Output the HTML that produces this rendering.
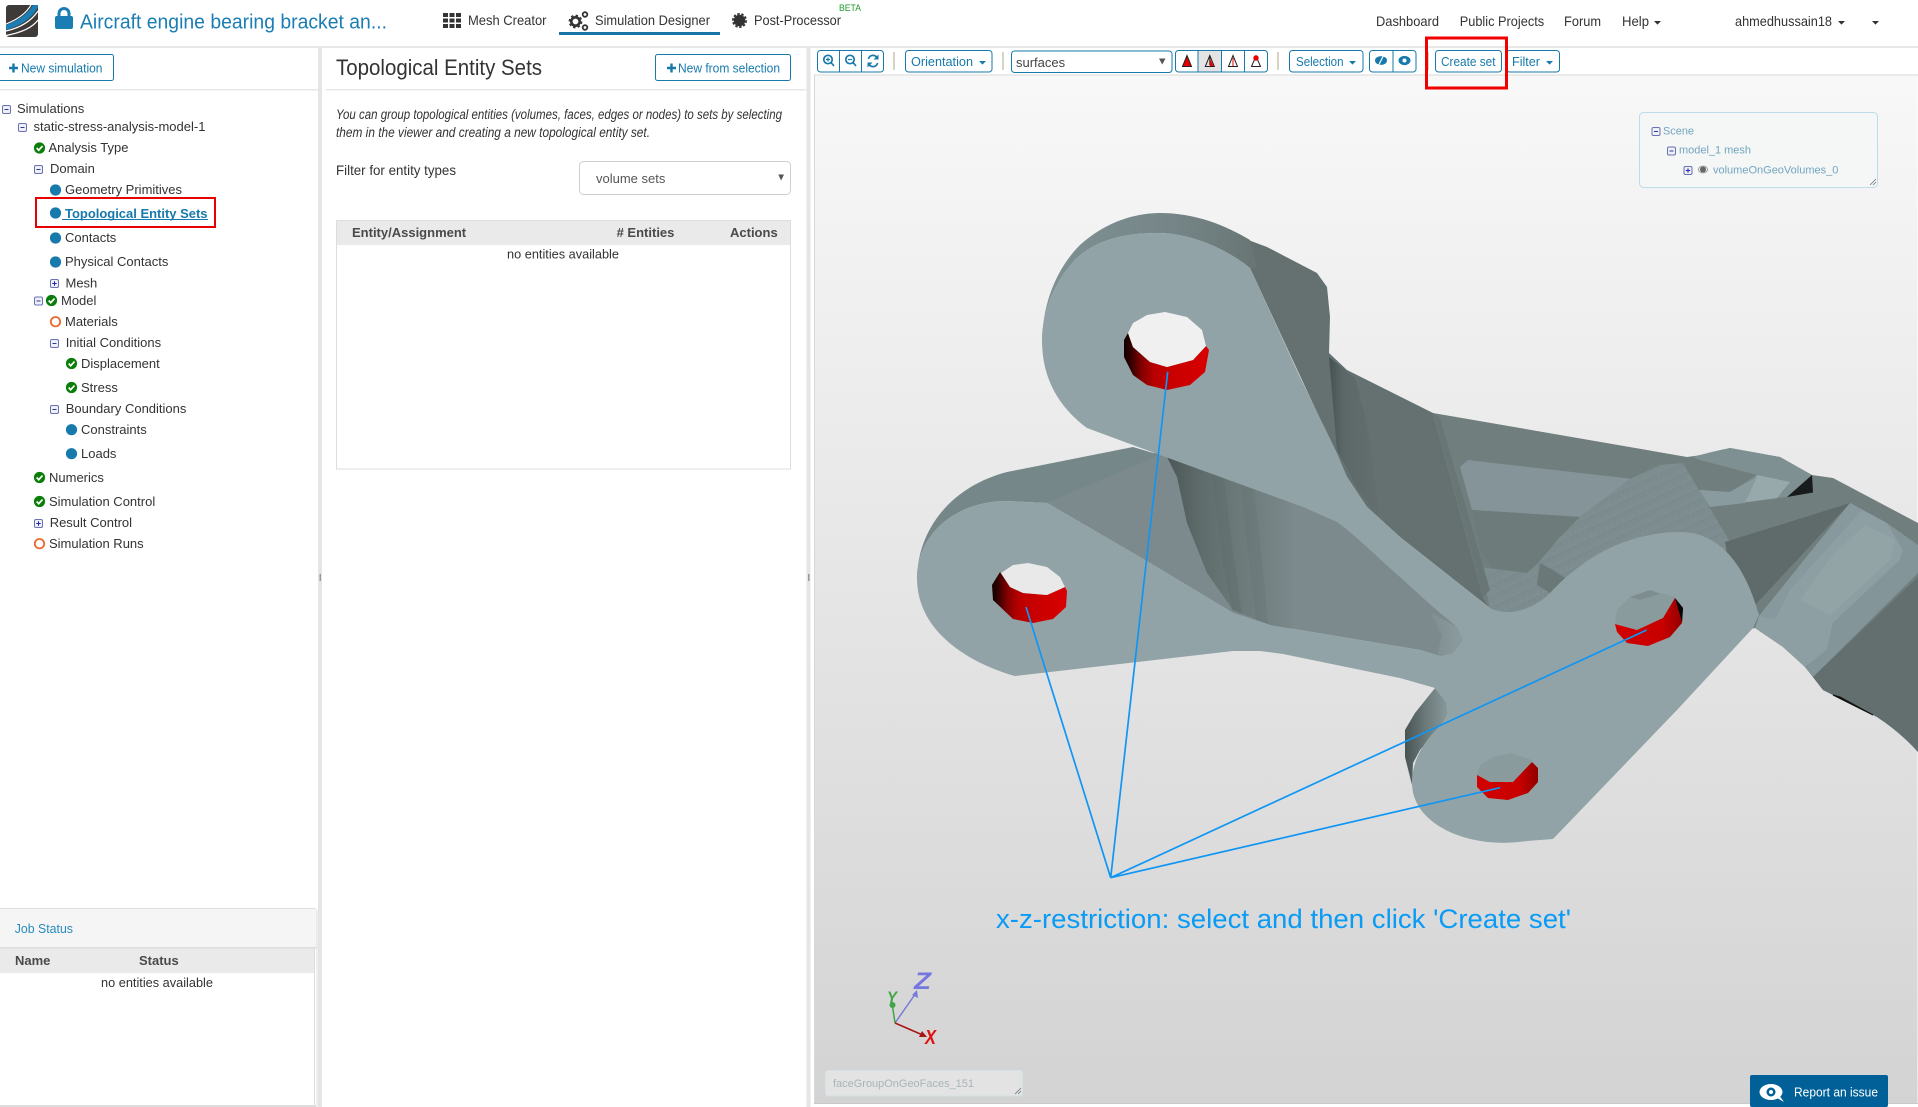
<!DOCTYPE html>
<html lang="en">
<head>
<meta charset="utf-8">
<title>Topological Entity Sets</title>
<style>
html,body{margin:0;padding:0;background:#fff;width:1918px;height:1107px;overflow:hidden}
svg{display:block;position:absolute;left:0;top:0}
text{font-family:"Liberation Sans",sans-serif;fill:#333;font-size:13px;white-space:pre}
.l{font-size:14px}
.b{fill:#1779ac}
.h{font-weight:bold;fill:#4a4a4a}
.s{font-size:11px;fill:#72a6c0}
.btn{fill:#fff;stroke:#1779ac;stroke-width:1}
.sep{stroke:#c9c4b4;stroke-width:1.5}
.hl{fill:none;stroke:#e60000;stroke-width:2}
</style>
</head>
<body>
<svg width="1918" height="1107" viewBox="0 0 1918 1107" xmlns="http://www.w3.org/2000/svg">
<defs>
<linearGradient id="bg" x1="0" y1="0" x2="0" y2="1"><stop offset="0" stop-color="#f8f8f8"/><stop offset="1" stop-color="#d3d3d3"/></linearGradient>
<linearGradient id="red" x1="0" y1="0" x2="1" y2="0"><stop offset="0" stop-color="#120000"/><stop offset=".07" stop-color="#2c0000"/><stop offset=".2" stop-color="#800000"/><stop offset=".35" stop-color="#b80000"/><stop offset=".55" stop-color="#c80000"/><stop offset="1" stop-color="#d80000"/></linearGradient>
<linearGradient id="red2" x1="0" y1="0" x2="1" y2="0"><stop offset="0" stop-color="#d20000"/><stop offset=".7" stop-color="#c80000"/><stop offset="1" stop-color="#900000"/></linearGradient>
<linearGradient id="band" x1="0" y1="0" x2="1" y2="0"><stop offset="0" stop-color="#7f9193"/><stop offset=".6" stop-color="#768688"/><stop offset="1" stop-color="#687574"/></linearGradient>
<linearGradient id="rib" gradientUnits="userSpaceOnUse" x1="1170" y1="0" x2="1295" y2="0"><stop offset="0" stop-color="#4e5959"/><stop offset=".25" stop-color="#5f6c6c"/><stop offset=".55" stop-color="#6d7a7a"/><stop offset="1" stop-color="#7b898c"/></linearGradient>
<linearGradient id="rib2" gradientUnits="userSpaceOnUse" x1="1330" y1="0" x2="1385" y2="0"><stop offset="0" stop-color="#485353"/><stop offset=".25" stop-color="#5c6868"/><stop offset="1" stop-color="#657171"/></linearGradient>
<linearGradient id="notch" x1="0" y1="0" x2="1" y2="0"><stop offset="0" stop-color="#485454"/><stop offset=".5" stop-color="#6d7b7c"/><stop offset="1" stop-color="#899a9c"/></linearGradient>
<linearGradient id="pock" x1="0" y1="0" x2="1" y2="0"><stop offset="0" stop-color="#7f8e91"/><stop offset="1" stop-color="#8b9b9e"/></linearGradient>
<pattern id="tri" width="12" height="10" patternUnits="userSpaceOnUse" patternTransform="rotate(-25)"><path d="M0 0L6 10L12 0Z" fill="#6d7c7e" opacity=".12"/><path d="M0 10L6 0L12 10Z" fill="#93a3a6" opacity=".08"/></pattern>
<g id="ck"><circle r="5.6" fill="#0a7d0a"/><path d="M-2.8 0L-.8 2.2L3 -1.9" fill="none" stroke="#fff" stroke-width="1.7"/></g>
<circle id="dot" r="5.6" fill="#1779ac"/>
<circle id="ring" r="4.7" fill="none" stroke="#ea6a2e" stroke-width="1.8"/>
<g id="mi"><rect x="-4" y="-4" width="8" height="8" rx="1.5" fill="#eef0f8" stroke="#6a70b4"/><path d="M-2 0H2" stroke="#343a90" stroke-width="1"/></g>
<g id="pl"><rect x="-4" y="-4" width="8" height="8" rx="1.5" fill="#eef0f8" stroke="#6a70b4"/><path d="M-2.2 0H2.2M0 -2.2V2.2" stroke="#2222bb" stroke-width="1"/></g>
<path id="car" d="M0 0H7L3.5 3.6Z"/>
</defs>

<g id="header">
  <rect x="0" y="46" width="1918" height="2" fill="#e8e8e8"/>
  <rect x="6" y="5" width="32" height="32" rx="3" fill="#3d3a38"/>
  <path d="M6 25Q25 18 33 5H38V7Q30 23 6 30Z" fill="#1a7db4"/>
  <path d="M6 24Q24 17 31 5M6 31Q28 26 38 11M6 35.500Q30 31 38 20" fill="none" stroke="#fff" stroke-width="1.2"/>
  <rect x="55" y="16" width="18" height="13" rx="2" fill="#1a7db4"/>
  <path d="M59 17V13.500a5 5 0 0 1 10 0V17" fill="none" stroke="#1a7db4" stroke-width="3"/>
  <text x="80" y="28.500" style="font-size:20px;fill:#1a7db4" textLength="307" lengthAdjust="spacingAndGlyphs">Aircraft engine bearing bracket an...</text>

  <g fill="#333"><rect x="443" y="13" width="5" height="4"/><rect x="449.500" y="13" width="5" height="4"/><rect x="456" y="13" width="5" height="4"/><rect x="443" y="18.500" width="5" height="4"/><rect x="449.500" y="18.500" width="5" height="4"/><rect x="456" y="18.500" width="5" height="4"/><rect x="443" y="24" width="5" height="4"/><rect x="449.500" y="24" width="5" height="4"/><rect x="456" y="24" width="5" height="4"/></g>
  <text class="l" x="468" y="25" textLength="78.500" lengthAdjust="spacingAndGlyphs">Mesh Creator</text>
  <g fill="none" stroke="#333"><circle cx="575.500" cy="21.500" r="4.200" stroke-width="2.600"/><circle cx="575.500" cy="21.500" r="6" stroke-width="1.800" stroke-dasharray="2.400 2.300"/><circle cx="585" cy="14.500" r="2.300" stroke-width="1.800"/><circle cx="585" cy="27.500" r="2.300" stroke-width="1.800"/></g>
  <text class="l" x="595" y="25" textLength="115" lengthAdjust="spacingAndGlyphs">Simulation Designer</text>
  <rect x="559" y="32" width="161" height="3" fill="#1a75a8"/>
  <circle cx="739.500" cy="20.500" r="5.800" fill="#333"/><circle cx="739.500" cy="20.500" r="6.600" fill="none" stroke="#333" stroke-width="1.800" stroke-dasharray="2.400 1.700"/>
  <text class="l" x="754" y="25" textLength="87" lengthAdjust="spacingAndGlyphs">Post-Processor</text>
  <text x="839" y="11" style="font-size:9px;fill:#1e9a2c" textLength="22" lengthAdjust="spacingAndGlyphs">BETA</text>

  <text class="l" x="1376" y="26" textLength="63" lengthAdjust="spacingAndGlyphs">Dashboard</text>
  <text class="l" x="1459.700" y="26" textLength="84.500" lengthAdjust="spacingAndGlyphs">Public Projects</text>
  <text class="l" x="1564" y="26" textLength="37" lengthAdjust="spacingAndGlyphs">Forum</text>
  <text class="l" x="1622" y="26" textLength="27" lengthAdjust="spacingAndGlyphs">Help</text>
  <use href="#car" x="1654" y="21" fill="#333"/>
  <text class="l" x="1735" y="26" textLength="97" lengthAdjust="spacingAndGlyphs">ahmedhussain18</text>
  <use href="#car" x="1838" y="21" fill="#333"/>
  <use href="#car" x="1872" y="21" fill="#333"/>
</g>

<g id="dividers">
  <rect x="318" y="48" width="4" height="1059" fill="#e5e5e5"/>
  <rect x="806.500" y="48" width="4" height="1059" fill="#e5e5e5"/>
  <rect x="319.500" y="574" width="1.500" height="7" fill="#999"/>
  <rect x="808" y="574" width="1.500" height="7" fill="#999"/>
  <rect x="0" y="89" width="318" height="1.500" fill="#e7e7e7"/>
  <rect x="326" y="89" width="480" height="1.500" fill="#e7e7e7"/>
</g>

<g id="tree">
  <rect class="btn" x="-2.500" y="54.500" width="116" height="26" rx="2"/>
  <path d="M9 68H18M13.500 63.500V72.500" stroke="#1779ac" stroke-width="2.400"/>
  <text class="b" x="21" y="72.500" textLength="81.500" lengthAdjust="spacingAndGlyphs">New simulation</text>

  <use href="#mi" x="6.500" y="109.500"/><text x="17" y="113">Simulations</text>
  <use href="#mi" x="22.500" y="127.500"/><text x="33.500" y="131.200">static-stress-analysis-model-1</text>
  <use href="#ck" x="39.500" y="148"/><text x="48.500" y="152.200">Analysis Type</text>
  <use href="#mi" x="38.500" y="169.500"/><text x="50" y="173.200">Domain</text>
  <use href="#dot" x="55.500" y="190"/><text x="65" y="194">Geometry Primitives</text>
  <use href="#dot" x="55.500" y="213"/>
  <text x="65" y="218" style="font-weight:bold;fill:#1779ac" textLength="142.500" lengthAdjust="spacingAndGlyphs">Topological Entity Sets</text>
  <rect x="62" y="219" width="146" height="1" fill="#1779ac"/>
  <rect class="hl" x="36" y="198" width="179" height="29"/>
  <use href="#dot" x="55.500" y="238"/><text x="65" y="242.200">Contacts</text>
  <use href="#dot" x="55.500" y="262"/><text x="65" y="266.200">Physical Contacts</text>
  <use href="#pl" x="54.500" y="283.500"/><text x="65.500" y="287.500">Mesh</text>
  <use href="#mi" x="38.500" y="301"/><use href="#ck" x="51.500" y="300.500"/><text x="61" y="305">Model</text>
  <use href="#ring" x="55.500" y="321.700"/><text x="65" y="326">Materials</text>
  <use href="#mi" x="54.500" y="343.500"/><text x="65.700" y="347">Initial Conditions</text>
  <use href="#ck" x="71.500" y="363.500"/><text x="81" y="368">Displacement</text>
  <use href="#ck" x="71.500" y="387.500"/><text x="81" y="392">Stress</text>
  <use href="#mi" x="54.500" y="409.500"/><text x="65.700" y="413">Boundary Conditions</text>
  <use href="#dot" x="71.500" y="429.700"/><text x="81" y="434">Constraints</text>
  <use href="#dot" x="71.500" y="453.700"/><text x="81" y="458">Loads</text>
  <use href="#ck" x="39.500" y="477.500"/><text x="49" y="482">Numerics</text>
  <use href="#ck" x="39.500" y="501.500"/><text x="49" y="506">Simulation Control</text>
  <use href="#pl" x="38.500" y="523.500"/><text x="49.700" y="527">Result Control</text>
  <use href="#ring" x="39.500" y="543.700"/><text x="49" y="548">Simulation Runs</text>
</g>

<g id="jobs">
  <rect x="-3" y="908.500" width="320" height="210" rx="3" fill="#fff" stroke="#dedede"/>
  <rect x="-2" y="909" width="318.500" height="38" fill="#f5f5f5"/>
  <rect x="-2" y="947" width="318.500" height="1.500" fill="#ddd"/>
  <rect x="-2" y="948.500" width="316" height="24.500" fill="#eaeaea"/>
  <rect x="314" y="948" width="1" height="158" fill="#ddd"/>
  <rect x="0" y="1105" width="316" height="2" fill="#ddd"/>
  <text x="14.700" y="933" style="fill:#2a8abf" textLength="58.300" lengthAdjust="spacingAndGlyphs">Job Status</text>
  <text class="h" x="15" y="965">Name</text>
  <text class="h" x="139" y="965">Status</text>
  <text x="101" y="987" textLength="112" lengthAdjust="spacingAndGlyphs">no entities available</text>
</g>

<g id="middle">
  <text x="336" y="75" style="font-size:22px" textLength="206" lengthAdjust="spacingAndGlyphs">Topological Entity Sets</text>
  <rect class="btn" x="655.500" y="54.500" width="135" height="26" rx="2"/>
  <path d="M667 68H676M671.500 63.500V72.500" stroke="#1779ac" stroke-width="2.400"/>
  <text class="b" x="678" y="72.500" textLength="102" lengthAdjust="spacingAndGlyphs">New from selection</text>
  <text x="336" y="119" style="font-style:italic;font-size:13.500px" textLength="446" lengthAdjust="spacingAndGlyphs">You can group topological entities (volumes, faces, edges or nodes) to sets by selecting</text>
  <text x="336" y="137" style="font-style:italic;font-size:13.500px" textLength="314" lengthAdjust="spacingAndGlyphs">them in the viewer and creating a new topological entity set.</text>
  <text class="l" x="336" y="175" textLength="120" lengthAdjust="spacingAndGlyphs">Filter for entity types</text>
  <rect x="579.500" y="161.500" width="211" height="33" rx="4" fill="#fff" stroke="#cfcfcf"/>
  <text x="596" y="183" style="fill:#555">volume sets</text>
  <path d="M778.300 174.500H784L781.100 180.500Z" fill="#555"/>
  <rect x="336.500" y="220.500" width="454" height="248.500" fill="#fff" stroke="#ddd"/>
  <rect x="337" y="221" width="453" height="24" fill="#eaeaea"/>
  <text class="h" x="352" y="237">Entity/Assignment</text>
  <text class="h" x="616.600" y="237"># Entities</text>
  <text class="h" x="730" y="237">Actions</text>
  <text x="507" y="258.500" textLength="112" lengthAdjust="spacingAndGlyphs">no entities available</text>
</g>

<g id="viewer">
  <rect x="814.500" y="75" width="1103" height="1028" fill="url(#bg)"/>
  <path d="M814.500 1104V75H1918" fill="none" stroke="#d8d8d8"/>
  <rect x="814" y="1103" width="1104" height="1" fill="#c9c9c9"/>

  <!-- right body -->
  <path d="M1433 413L1687 457Q1705 455 1730 448L1780 457L1812 475L1833 478L1918 523V752Q1900 732 1877 717L1823 690L1805 667L1783 647L1755 628L1700 640L1600 620L1490 608L1483 597Z" fill="#707e7d"/>
  <!-- window -->
  <path d="M1460 467L1468 460L1633 479L1580 517L1472 510Z" fill="#849498"/>
  <path d="M1472 510L1580 517L1560 547L1540 567L1527 580L1507 590L1480 550Z" fill="#6d7b7a"/>
  <!-- textured cylinder -->
  <path d="M1580 517L1630 479L1660 465L1683 463L1693 480L1730 542L1720 560L1660 560L1590 580L1550 615L1507 620L1490 608L1480 567L1527 573L1538 563L1560 537Z" fill="#7c8c8f"/>
  <path d="M1580 517L1630 479L1660 465L1683 463L1693 480L1730 542L1720 560L1660 560L1590 580L1550 615L1507 620L1490 608L1480 567L1527 573L1538 563L1560 537Z" fill="url(#tri)"/>
  <path d="M1540 563L1553 570L1565 578L1550 593L1537 585Z" fill="#6a7878"/>
  <!-- top-right piece -->
  <path d="M1693 457Q1710 452 1730 448L1780 457L1812 475L1787 497L1740 503L1710 507L1697 490L1730 492L1757 475L1700 460Z" fill="#7f9093"/>
  <path d="M1757 475L1790 482L1777 498L1740 503Z" fill="#98a9ac"/>
  <path d="M1700 490L1730 492L1757 477L1745 503L1710 507Z" fill="#8a9b9f"/>
  <path d="M1812 475L1813 492.500L1787 497Z" fill="#171b1b"/>
  <!-- dark recess -->
  <path d="M1725 542L1850 503L1757 603L1740 620Z" fill="#5f6b6b"/>
  <!-- light fillet -->
  <path d="M1759 616L1850 503L1887 523L1903 550L1900 560L1833 623L1827 650L1805 667L1783 647L1755 628Z" fill="#8e9fa3"/>
  <path d="M1759 616L1850 503L1862 510L1790 590L1775 620Z" fill="#88999d"/>
  <path d="M1800 600L1833 555L1865 525L1895 540L1890 560L1830 615Z" fill="#93a4a7"/>
  <path d="M1887 523L1918 545V573L1813 677L1805 667L1827 650L1833 623L1900 560L1903 550Z" fill="#84959a"/>
  <path d="M1813 677L1918 577V752Q1900 732 1877 717L1823 690Z" fill="#636f6f"/>
  <path d="M1833 695L1873 715L1840 697Z" fill="#111" stroke="#111"/>

  <!-- dark wall -->
  <path d="M1200 222L1267 247L1317 273L1327 287L1330 317L1329 353L1347 370L1433 413L1483 597L1490 608L1400 537L1367 507L1347 477L1250 268Z" fill="#657171"/>
  <path d="M1433 413L1440 418L1490 590L1483 597Z" fill="#697676"/>
  <path d="M1329 357L1337 450L1360 493L1380 517L1367 423L1355 378Z" fill="url(#rib2)"/>
  <!-- upper lobe side -->
  <path d="M1042 340C1043 305 1055 270 1080 245C1105 222 1135 213 1160 213C1195 213 1225 225 1250 240L1257 268L1250 268C1225 248 1190 233 1157 233C1125 233 1095 240 1075 260C1052 285 1042 315 1042 340Z" fill="url(#band)"/>

  <!-- mid region -->
  <path d="M1047 503L1160 450L1350 515L1410 570L1470 640L1453 660L1420 650L1270 625L1233 613L1150 563Z" fill="#7c8a8d"/>
  <path d="M1430 612L1457 627L1463 640L1453 653L1437 656L1442 635Z" fill="url(#pock)"/>
  <!-- ribs -->
  <path d="M1167 457L1177 477L1187 523L1207 573L1233 610L1270 625L1292 632L1292 500L1160 452Z" fill="url(#rib)"/>
  <path d="M1212 474L1222 560L1232 610L1242 614L1232 545L1224 478Z" fill="#5f6c6c" opacity=".4"/>
  <path d="M1240 484L1250 570L1256 620L1268 624L1262 560L1254 488Z" fill="#63706f" opacity=".3"/>
  <!-- left lobe side -->
  <path d="M917 578C918 530 950 487 1007 472L1133 447L1160 455L1047 503L1007 501C955 501 917 535 917 578Z" fill="#76878a"/>
  <!-- notch wall -->
  <path d="M1435 688L1447 703L1448 713L1443 723L1420 750L1413 763L1412 785L1405 757L1405 730L1415 713Z" fill="url(#notch)"/>

  <!-- main flat face -->
  <path d="M1042 340C1042 315 1052 285 1075 260C1095 240 1125 233 1157 233C1190 233 1225 248 1250 268L1300 377L1337 453L1347 477L1367 507L1400 537L1490 608C1510 618 1535 608 1550 593C1585 555 1630 532 1680 532C1720 532 1745 565 1759 615L1753 628L1677 710L1553 839L1527 841C1470 850 1412 825 1412 783C1412 755 1430 735 1443 723L1448 713L1447 703L1435 688L1400 678L1283 654L1260 651L1233 651L1015 676C975 665 917 635 917 578C917 535 955 501 1007 501L1047 503L1150 563L1233 613L1270 625L1420 650L1440 656L1453 653L1463 640L1457 627L1433 607L1400 577C1375 555 1355 535 1337 522L1303 507L1160 455L1087 428C1060 408 1042 380 1042 340Z" fill="#91a3a6"/>

  <!-- hole 1 -->
  <path d="M1128 333L1124 340L1124 357L1133 375L1147 385L1167 390L1190 385L1205 372L1209 350L1206 346L1193 360L1167 367L1150 362L1133 347Z" fill="url(#red)"/>
  <path d="M1128 333L1133 323L1147 315L1165 312L1187 317L1202 330L1206 346L1193 360L1167 367L1150 362L1133 347Z" fill="#f0f0f0"/>
  <!-- hole 2 -->
  <path d="M1000 572L992 585L993 600L1013 619L1033 623L1053 619L1066 607L1067 591L1065 587L1047 595L1023 593L1010 587Z" fill="url(#red)"/>
  <path d="M1001 573L1013 565L1028 563L1047 567L1060 577L1065 587L1047 595L1023 593L1010 587Z" fill="#e9e9e9"/>
  <!-- hole 3 -->
  <path d="M1615 623L1617 610L1630 597L1650 590L1675 597L1673 608L1663 620L1637 630Z" fill="#8a9b9e"/>
  <path d="M1630 597L1650 590L1660 594L1640 600Z" fill="#7d8d90"/>
  <path d="M1615 624L1637 630L1663 618L1675 598L1683 608L1682 623L1670 637L1648 646L1627 643L1617 632Z" fill="url(#red2)"/>
  <path d="M1675 598L1683 608L1682 622Z" fill="#050505"/>
  <!-- hole 4 -->
  <path d="M1477 775L1480 765L1493 757L1510 753L1532 760L1528 772L1513 782L1490 782Z" fill="#8a9b9e"/>
  <path d="M1477 775L1490 782L1513 782L1532 762L1538 768L1538 782L1528 793L1508 800L1488 798L1477 787Z" fill="url(#red2)"/>

  <!-- leader lines -->
  <g fill="none" stroke="#0f96f5" stroke-width="1.700">
    <path d="M1110.700 877.700L1167.700 371.700"/>
    <path d="M1110.700 877.700L1026 607"/>
    <path d="M1110.700 877.700L1646.700 630"/>
    <path d="M1110.700 877.700L1500 787.700"/>
  </g>
  <text x="996" y="928" style="font-size:26.500px;fill:#0a9bf5" textLength="575" lengthAdjust="spacingAndGlyphs">x-z-restriction: select and then click 'Create set'</text>

  <!-- scene tree -->
  <rect x="1639.500" y="112.500" width="238" height="75" rx="4" fill="#f5f6f6" stroke="#bcdcea"/>
  <path d="M1870 185L1876 179M1873 185L1876 182" stroke="#777" stroke-width=".8"/>
  <use href="#mi" x="1656" y="131.500"/><text class="s" x="1663" y="134.500" textLength="31" lengthAdjust="spacingAndGlyphs">Scene</text>
  <use href="#mi" x="1671.500" y="151"/><text class="s" x="1679" y="153.500" textLength="72" lengthAdjust="spacingAndGlyphs">model_1 mesh</text>
  <use href="#pl" x="1688" y="170.500"/>
  <circle cx="1703" cy="169.500" r="3" fill="#666"/><ellipse cx="1703" cy="169.500" rx="4.500" ry="3.400" fill="none" stroke="#999"/>
  <text class="s" x="1713" y="173.500">volumeOnGeoVolumes_0</text>

  <!-- axes -->
  <path d="M895 1023L916 993" stroke="#7a7ad8" stroke-width="1.500"/><path d="M917 990L918 998L912 995Z" fill="#7a7ad8"/>
  <text x="914" y="989" style="font-size:24px;font-weight:bold;font-style:italic;fill:#7676e0" textLength="17" lengthAdjust="spacingAndGlyphs">Z</text>
  <path d="M895 1023L892 1003" stroke="#3fa545" stroke-width="1.500"/><circle cx="892.500" cy="1005" r="3" fill="#3fa545"/>
  <text x="887" y="1003" style="font-size:17px;font-weight:bold;font-style:italic;fill:#3fa545" textLength="10" lengthAdjust="spacingAndGlyphs">Y</text>
  <path d="M895 1023L925 1036" stroke="#a81616" stroke-width="1.500"/><path d="M927 1037L919 1037L922 1031Z" fill="#a81616"/>
  <text x="925" y="1044" style="font-size:20px;font-weight:bold;font-style:italic;fill:#e01010" textLength="11" lengthAdjust="spacingAndGlyphs">X</text>

  <!-- face label -->
  <rect x="825.500" y="1070.500" width="197" height="25.500" rx="3" fill="#e3e3e3" stroke="#d2e2e8"/>
  <text x="833" y="1087" style="font-size:11px;fill:#a8b5b9" textLength="141" lengthAdjust="spacingAndGlyphs">faceGroupOnGeoFaces_151</text>
  <path d="M1015 1094L1021 1088M1018 1094L1021 1091" stroke="#777" stroke-width=".8"/>

  <!-- report -->
  <rect x="1750" y="1075" width="138" height="32" rx="2" fill="#006097"/>
  <ellipse cx="1771" cy="1092" rx="11.500" ry="8" fill="#fff"/>
  <path d="M1777 1098L1784 1102L1779 1095Z" fill="#fff"/>
  <circle cx="1771" cy="1092" r="4.500" fill="#006097"/><circle cx="1771" cy="1092" r="2" fill="#fff"/>
  <text x="1794" y="1096.500" style="fill:#fff;font-size:12.500px" textLength="84" lengthAdjust="spacingAndGlyphs">Report an issue</text>
</g>

<g id="toolbar">
  <rect class="btn" x="817.500" y="50.500" width="66" height="21.500" rx="3"/>
  <path d="M839.500 50.500V72M861.500 50.500V72" stroke="#1779ac"/>
  <g fill="none" stroke="#1779ac" stroke-width="1.700">
    <circle cx="828" cy="59.500" r="4.200"/><path d="M831 62.500L834 66"/><path d="M826 59.500H830M828 57.500V61.500" stroke-width="1.200"/>
    <circle cx="850" cy="59.500" r="4.200"/><path d="M853 62.500L856 66"/><path d="M848 59.500H852" stroke-width="1.200"/>
    <path d="M868.500 59A4.500 4.500 0 0 1 877 58M877.500 63A4.500 4.500 0 0 1 869 64"/>
  </g>
  <path d="M878.500 54.500V59.500H873.500ZM867.500 67.500V62.500H872.500Z" fill="#1779ac"/>
  <path class="sep" d="M894 52V70"/>
  <rect class="btn" x="905.500" y="50.500" width="86.500" height="21.500" rx="3"/>
  <text class="b" x="911" y="66.200" textLength="62" lengthAdjust="spacingAndGlyphs">Orientation</text>
  <use href="#car" x="979" y="61" fill="#1779ac"/>
  <path class="sep" d="M1003 52V70"/>
  <rect class="btn" x="1011.500" y="51" width="160.500" height="21.500" rx="3"/>
  <text x="1016" y="67" style="font-size:13px;fill:#444">surfaces</text>
  <path d="M1159 58.500H1165.500L1162.200 64.500Z" fill="#555"/>

  <rect class="btn" x="1175.500" y="50.500" width="92" height="21.500" rx="3"/>
  <rect x="1198" y="51" width="23.500" height="20.500" fill="#e4e4e4"/>
  <path d="M1198 50.500V72M1221.500 50.500V72M1244.500 50.500V72" stroke="#1779ac"/>
  <path d="M1187 55.500L1182.500 66.500H1191.500Z" fill="#e60000" stroke="#222" stroke-width="1"/>
  <path d="M1209.800 55.500L1205.300 66.500H1214.300ZM1209.800 55.500V65" fill="none" stroke="#222" stroke-width="1"/><path d="M1209.800 58L1209.800 66L1213.500 66Z" fill="#e60000"/>
  <path d="M1233 55.500L1228.500 66.500H1237.500Z" fill="none" stroke="#222" stroke-width="1"/><path d="M1233 58V66" stroke="#e60000"/>
  <path d="M1256 56L1251.500 66.500H1260.500Z" fill="none" stroke="#222" stroke-width="1"/><circle cx="1256" cy="58" r="2.700" fill="#e60000"/>
  <path class="sep" d="M1278 52V70"/>

  <rect class="btn" x="1289.500" y="50.500" width="73.500" height="21.500" rx="3"/>
  <text class="b" x="1296" y="66.200" textLength="47.500" lengthAdjust="spacingAndGlyphs">Selection</text>
  <use href="#car" x="1349" y="61" fill="#1779ac"/>
  <rect class="btn" x="1369.500" y="50.500" width="46.500" height="21.500" rx="3"/>
  <path d="M1393 50.500V72" stroke="#1779ac"/>
  <ellipse cx="1381" cy="60.500" rx="6" ry="4.400" fill="#1779ac"/>
  <path d="M1383.500 55.500L1378.500 65.500" stroke="#fff" stroke-width="1.200"/>
  <ellipse cx="1404.500" cy="60.500" rx="6" ry="4.600" fill="#1779ac"/><circle cx="1404.500" cy="60.500" r="2" fill="#fff"/>
  <path class="sep" d="M1428 52V70"/>
  <rect class="btn" x="1435.500" y="50.500" width="66" height="21.500" rx="3"/>
  <text class="b" x="1441" y="66.200" textLength="54.500" lengthAdjust="spacingAndGlyphs">Create set</text>
  <rect class="btn" x="1506.500" y="50.500" width="53" height="21.500" rx="3"/>
  <text class="b" x="1512" y="66.200" textLength="28" lengthAdjust="spacingAndGlyphs">Filter</text>
  <use href="#car" x="1546" y="61" fill="#1779ac"/>
  <rect x="1426.500" y="38" width="80" height="50" fill="none" stroke="#f00000" stroke-width="3"/>
</g>
</svg>
</body>
</html>
